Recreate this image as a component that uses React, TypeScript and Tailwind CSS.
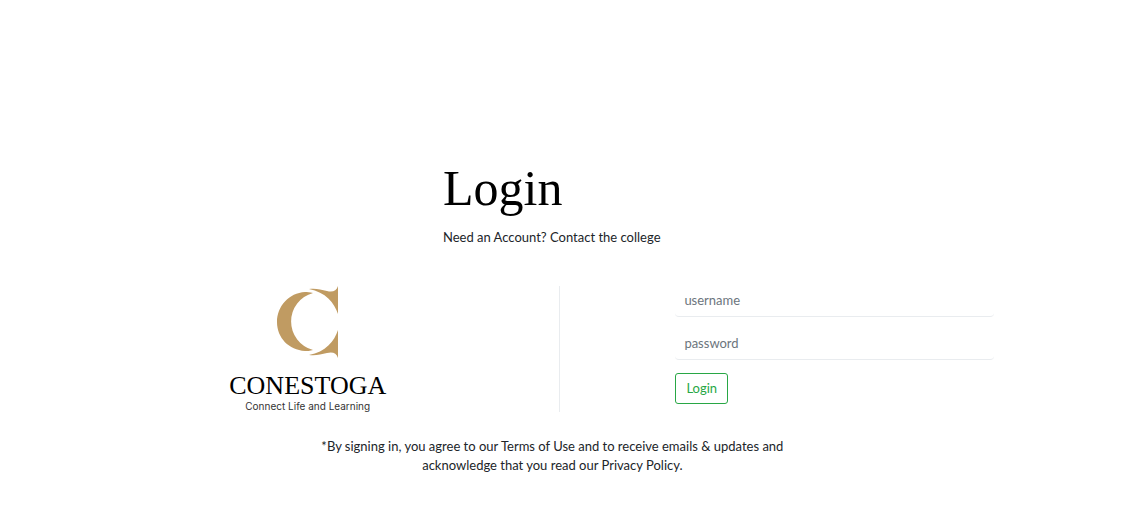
function Logo() {
  return (
    <div className="flex flex-col items-center">
      <svg viewBox="0 0 62 72" className="h-[72px] w-[62px]" fill="#c09b62" aria-hidden="true">
        <path d="M36 7 C33 6 30 6 28 6 C12 7 0 20 0 36 C0 52 12 64 28 65 C30 65 33 65 36 64 A29.500 29.500 0 0 1 36 7Z" />
        <path d="M32 3 C38 2 44 3.500 50 5 C55.500 6.500 59.500 5 61 0 V28 C57.500 17 48.500 6 32 3Z" />
        <path d="M32 69 C38 70 44 68.500 50 67 C55.500 65.500 59.500 67 61 72 V44 C57.500 55 48.500 66 32 69Z" />
      </svg>
      <div className="mt-[14px] font-['Liberation_Serif',serif] text-[26px] leading-7 text-black">CONESTOGA</div>
      <div className="font-['Inter',sans-serif] text-[10px] leading-3 text-[#333333]">
        Connect Life and Learning
      </div>
    </div>
  );
}

const field =
  "block h-[31px] w-full rounded border-b border-[#e9ecef] bg-white px-[9px] pb-[2px] text-[13px] text-[#495057] placeholder:text-[#6c757d] outline-none";

export default function App() {
  return (
    <main className="bg-white px-14 pt-[158px] pb-8 font-['Lato','Open_Sans',sans-serif] text-[13px] leading-[19px] text-[#212529]">
      <header className="ml-[38.2%]">
        <h1 className="font-['Liberation_Serif',serif] text-[50px] leading-[60px] text-black">Login</h1>
        <p className="mt-[10px]">Need an Account? Contact the college</p>
      </header>
      <div className="mt-[39px] flex min-h-[125px]">
        <section className="w-[49.7%]">
          <Logo />
        </section>
        <section className="flex-1 border-l border-[#e9ecef]">
          <form className="mr-[14.7%] ml-[22.6%]" onSubmit={(e) => e.preventDefault()}>
            <input className={field} aria-label="username" name="username" placeholder="username" />
            <input
              className={`${field} mt-3`}
              aria-label="password"
              name="password"
              type="password"
              placeholder="password"
            />
            <button
              type="submit"
              className="mt-[13px] h-[31px] rounded-[3px] border border-[#28a745] px-[10px] text-[13px] text-[#28a745]"
            >
              Login
            </button>
          </form>
        </section>
      </div>
      <p className="mt-[25px] mr-[2%] text-center">
        *By signing in, you agree to our Terms of Use and to receive emails &amp; updates and
        <br />
        acknowledge that you read our Privacy Policy.
      </p>
    </main>
  );
}
